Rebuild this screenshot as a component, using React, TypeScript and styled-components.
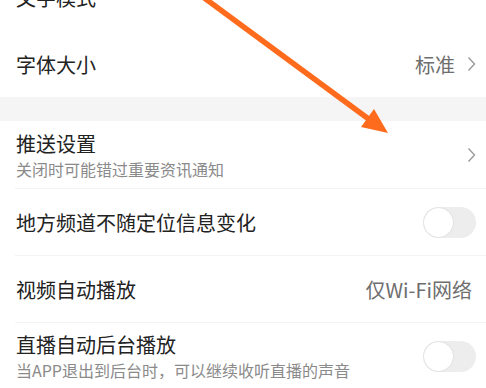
import React from "react";
import styled, { createGlobalStyle } from "styled-components";

const GlobalStyle = createGlobalStyle`
  html, body {
    margin: 0;
    padding: 0;
    background: #ffffff;
    overflow: hidden;
  }
  body {
    font-family: "Noto Sans CJK SC", "Noto Sans", sans-serif;
  }
`;

type Item = {
  title: string;
  sub?: string;
  value?: string;
  chevron?: boolean;
  control?: "toggle" | "checkbox";
};

const topGroup: Item[] = [
  { title: "文字模式", control: "checkbox" },
  { title: "字体大小", value: "标准", chevron: true },
];

const mainGroup: Item[] = [
  { title: "推送设置", sub: "关闭时可能错过重要资讯通知", chevron: true },
  { title: "地方频道不随定位信息变化", control: "toggle" },
  { title: "视频自动播放", value: "仅Wi-Fi网络" },
  { title: "直播自动后台播放", sub: "当APP退出到后台时，可以继续收听直播的声音", control: "toggle" },
];

const SettingsRow: React.FC<{ item: Item; divided?: boolean }> = ({ item, divided }) => (
  <Row divided={divided}>
    <TextCol>
      <Title>{item.title}</Title>
      {item.sub && <Sub>{item.sub}</Sub>}
    </TextCol>
    <Trail>
      {item.value && <Value>{item.value}</Value>}
      {item.chevron && (
        <svg width="9" height="16" viewBox="0 0 9 16">
          <path d="M1.5 1.5 L7.5 8 L1.5 14.5" fill="none" stroke="#9a9a9a" strokeWidth="1.4" />
        </svg>
      )}
      {item.control === "toggle" && (
        <Toggle>
          <Knob />
        </Toggle>
      )}
      {item.control === "checkbox" && <CheckBox />}
    </Trail>
  </Row>
);

const App: React.FC = () => {
  return (
    <>
      <GlobalStyle />
      <Screen>
        <List>
          {topGroup.map((it) => (
            <SettingsRow key={it.title} item={it} />
          ))}
          <Band />
          {mainGroup.map((it, i) => (
            <SettingsRow key={it.title} item={it} divided={i > 0} />
          ))}
        </List>
        <Arrow width="486" height="388" viewBox="0 0 486 388">
          <line x1="203" y1="-3" x2="370" y2="120" stroke="#ff6b1c" strokeWidth="5.5" />
          <polygon points="388,133 361,127 374,109" fill="#ff6b1c" />
        </Arrow>
      </Screen>
    </>
  );
};

const Screen = styled.div`
  position: relative;
  width: 486px;
  height: 388px;
  overflow: hidden;
  background: #ffffff;
`;

const List = styled.div`
  display: flex;
  flex-direction: column;
  margin-top: -37px;
`;

const Row = styled.div<{ divided?: boolean }>`
  display: flex;
  align-items: center;
  justify-content: space-between;
  height: 67px;
  box-sizing: border-box;
  padding: 0 10px 0 16px;
  border-top: 1px solid ${(p) => (p.divided ? "#f3f3f3" : "transparent")};
  border-image: ${(p) =>
    p.divided ? "linear-gradient(to right, transparent 16px, #f3f3f3 16px) 1" : "none"};
`;

const TextCol = styled.div`
  display: flex;
  flex-direction: column;
`;

const Title = styled.div`
  font-size: 20px;
  line-height: 29px;
  color: #222222;
`;

const Sub = styled.div`
  font-size: 16px;
  line-height: 23px;
  color: #8a8a8a;
`;

const Trail = styled.div`
  display: flex;
  align-items: center;
  gap: 8px;
`;

const Value = styled.div`
  font-size: 20px;
  line-height: 29px;
  color: #6e6e6e;
  margin-right: 4px;
`;

const Toggle = styled.div`
  width: 53px;
  height: 31px;
  border-radius: 16px;
  background: #ededed;
  position: relative;
`;

const Knob = styled.div`
  position: absolute;
  left: 1px;
  top: 1px;
  width: 29px;
  height: 29px;
  border-radius: 50%;
  background: #ffffff;
  box-shadow: 0 0 1.5px rgba(0, 0, 0, 0.18);
`;

const CheckBox = styled.div`
  width: 18px;
  height: 18px;
  border: 1.5px solid #cfcfcf;
  border-radius: 3px;
  transform: translateY(-10px);
`;

const Band = styled.div`
  height: 24px;
  background: #f5f5f5;
`;

const Arrow = styled.svg`
  position: absolute;
  left: 0;
  top: 0;
  pointer-events: none;
`;

export default App;
